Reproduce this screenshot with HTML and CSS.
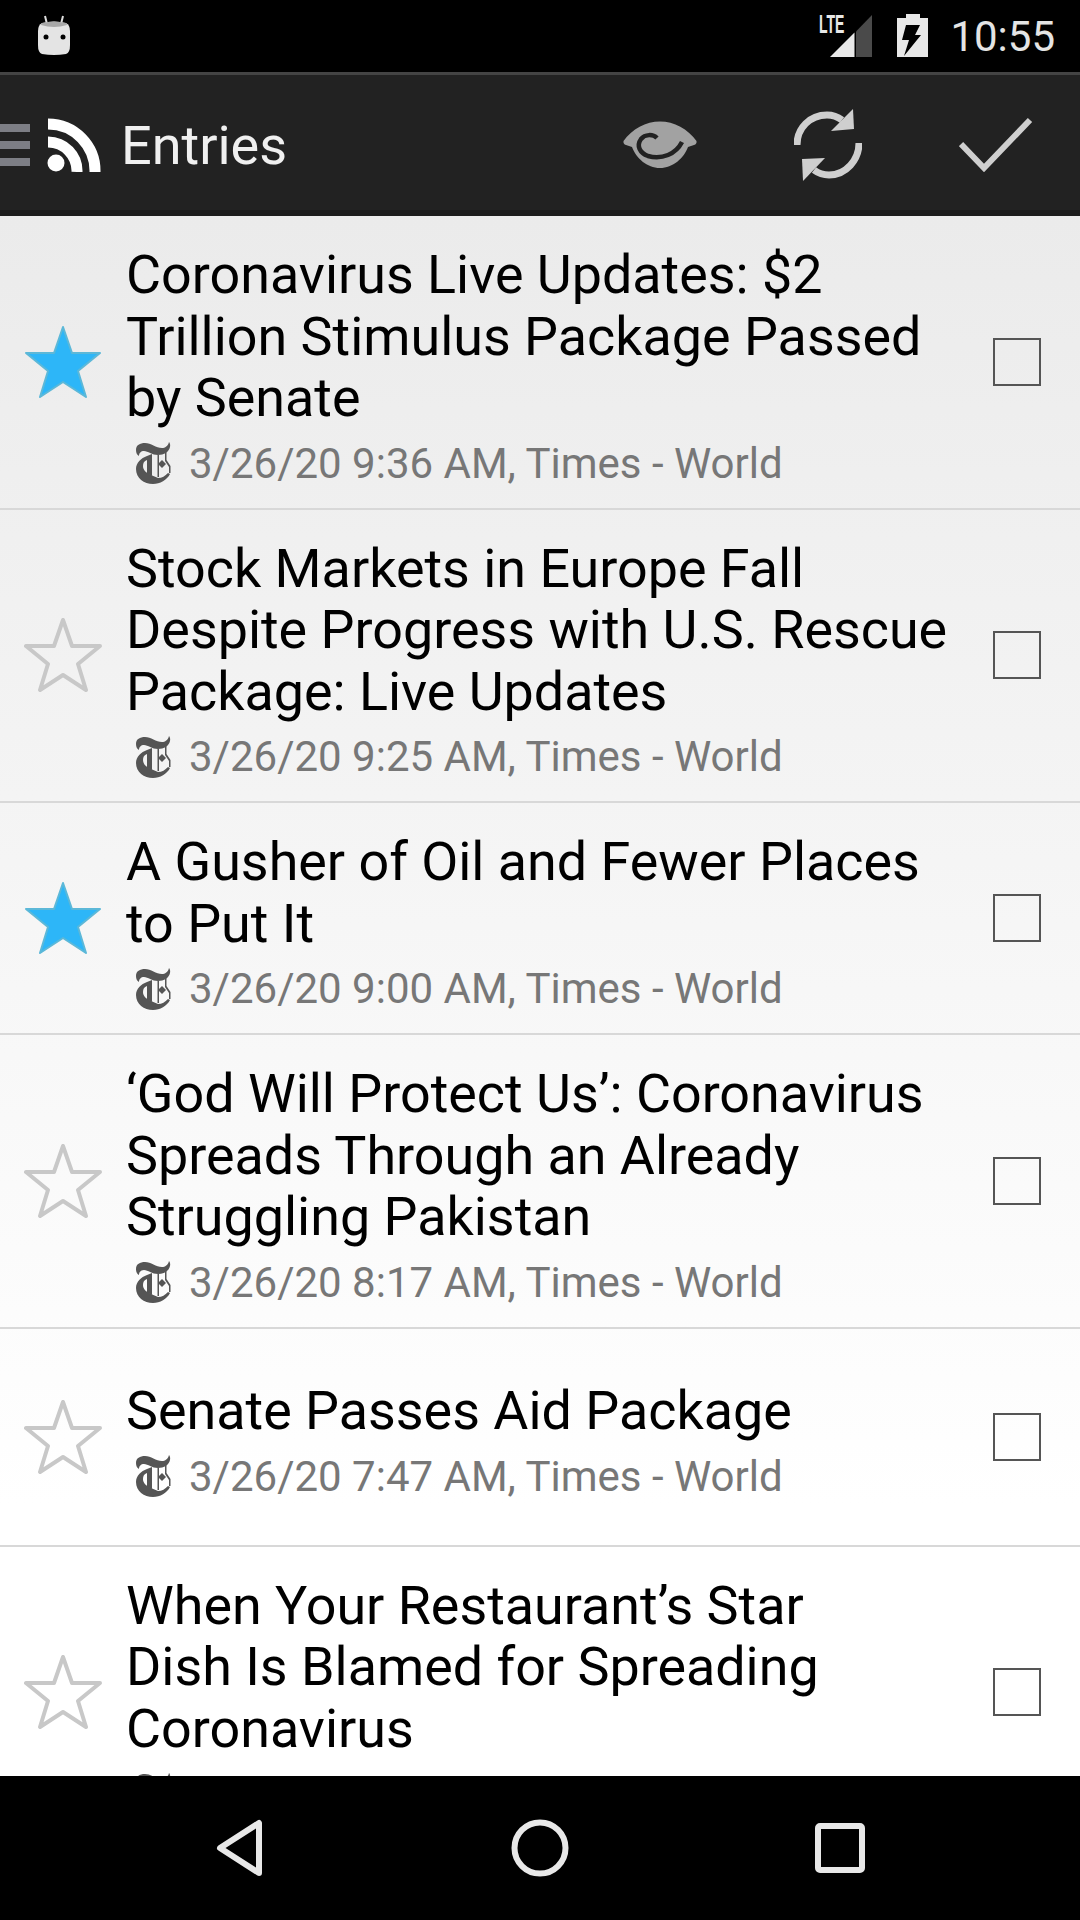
FILE: index.html
```html
<!DOCTYPE html>
<html lang="en">
<head>
    <meta charset="UTF-8">
    <meta name="viewport" content="width=device-width, initial-scale=1.0">
    <title>Entries</title>
    <link rel="stylesheet" href="styles.css">
</head>
<body>
    <svg class="defs" width="0" height="0">
        <symbol id="star" viewBox="0 0 78 74">
            <path d="M39 2 L48 28 L76 28 L54 46 L62 72 L39 57 L16 72 L24 46 L2 28 L30 28 Z"/>
        </symbol>
        <symbol id="nyt" viewBox="0 0 35 42">
            <path d="M0 8 C0 3 4 1 9 1 C15 1 20 6 26 6 C29 6 32 4 33 0 C34 1 34.500 3 34 5 C33 10 28 13 22 13 C16 13 12 9 8 9 C5 9 3 11 3 14 C1 13 0 11 0 8 Z"/>
            <path d="M11 14 C5 16 0 21 0 27 C0 36 8 42 17 42 C24 42 31 38 34 32 L32 31 C29 34 26 36 22 36 L15 33 C10 31 7 28 7 24 C7 21 8 19 11 18 Z"/>
            <path d="M11 14 L16 12 L16 34 L11 32 Z"/>
            <path d="M26 18 L30 22 L26 26 L22 22 Z"/>
            <path d="M21.500 13 L23 13 L23 35 L21.500 35 Z"/>
            <path d="M29 11 L30.500 10 L30.500 18 L34.500 24 L34.500 31 L33 31 L33 25 L29 19 Z"/>
        </symbol>
    </svg>

    <div class="status-bar">
        <svg class="android" width="36" height="42" viewBox="0 0 36 42">
            <path class="android-ant" d="M9 1 L11 9 M27 1 L25 9"/>
            <path class="android-head" d="M6 8 Q18 5 30 8 Q34 10 34 16 L34 30 Q34 38 30 39 Q18 41 6 39 Q2 38 2 30 L2 16 Q2 10 6 8 Z"/>
            <path class="android-top" d="M6 8 Q18 5 30 8 Q31 9 31 10 Q18 14 5 10 Q5 9 6 8 Z"/>
            <circle class="android-eye" cx="10" cy="22" r="2.500"/>
            <circle class="android-eye" cx="27" cy="22" r="2.500"/>
        </svg>
        <div class="status-right">
            <svg class="signal" width="54" height="52" viewBox="0 -4 54 52">
                <text class="lte" transform="translate(0 19) scale(.56 1)">LTE</text>
                <path class="signal-on" d="M11 43 L35.500 18.500 L35.500 43 Z"/>
                <path class="signal-off" d="M37 17.500 L53 1 L53 43 L37 43 Z"/>
            </svg>
            <svg class="battery" width="32" height="44" viewBox="0 0 32 44">
                <path class="battery-body" fill-rule="evenodd" d="M10 0 L24 0 L24 4 L32 4 L32 43 L1 43 L1 4 L10 4 Z M10 11 L24 11 L19 21 L25 21 L8 42 L13 26 L6 26 Z"/>
            </svg>
            <span class="clock">10:55</span>
        </div>
    </div>

    <div class="app-bar">
        <div class="drawer-icon"><span></span><span></span><span></span></div>
        <svg class="rss" width="54" height="54" viewBox="0 0 54 54">
            <circle cx="9" cy="45" r="8.500"/>
            <path class="rss-arc" d="M1 24 A29 29 0 0 1 30 54"/>
            <path class="rss-arc" d="M1 6 A47 47 0 0 1 48 54"/>
        </svg>
        <span class="app-title">Entries</span>
        <div class="actions">
            <div class="action">
                <svg width="76" height="50" viewBox="0 0 76 50">
                    <path class="eye" d="M1.500 21 C10 9 24 1.500 38 1.500 C52 1.500 66 9 74.500 21 Q75 24 72 25 L66 27 C62 38 51 48 38 48 C25 48 14 38 10 27 L4 25 Q1 24 1.500 21 Z"/>
                    <path class="eye-ring" d="M35 18 C31 14 23 14 19 19 C14 26 18 33 26 36 C40 40 54 34 60 22"/>
                </svg>
            </div>
            <div class="action">
                <svg width="68" height="74" viewBox="0 0 68 74">
                    <path class="sync-line" d="M3 37 C3 20 16 7 33 7 C39 7 44 9 48 12"/>
                    <path class="sync-head" d="M59 1 L60 21 L37 23 Z"/>
                    <path class="sync-line" d="M65 35 C65 52 52 67 35 67 C29 67 24 65 20 62"/>
                    <path class="sync-head" d="M9 73 L8 51 L31 50 Z"/>
                </svg>
            </div>
            <div class="action">
                <svg width="74" height="56" viewBox="0 0 74 56">
                    <path class="tick" d="M2 27 L25 51 L71 3"/>
                </svg>
            </div>
        </div>
    </div>
    <div class="app-bar-edge"></div>

    <div class="list">
        <div class="row">
            <svg class="star on"><use href="#star"/></svg>
            <div class="row-text">
                <div class="entry-title">Coronavirus Live Updates: $2 Trillion Stimulus Package Passed by Senate</div>
                <div class="entry-meta"><svg class="feed-logo"><use href="#nyt"/></svg>3/26/20 9:36 AM, Times - World</div>
            </div>
            <div class="checkbox"></div>
        </div>
        <div class="row">
            <svg class="star"><use href="#star"/></svg>
            <div class="row-text">
                <div class="entry-title">Stock Markets in Europe Fall Despite Progress with U.S. Rescue Package: Live Updates</div>
                <div class="entry-meta"><svg class="feed-logo"><use href="#nyt"/></svg>3/26/20 9:25 AM, Times - World</div>
            </div>
            <div class="checkbox"></div>
        </div>
        <div class="row">
            <svg class="star on"><use href="#star"/></svg>
            <div class="row-text">
                <div class="entry-title">A Gusher of Oil and Fewer Places to Put It</div>
                <div class="entry-meta"><svg class="feed-logo"><use href="#nyt"/></svg>3/26/20 9:00 AM, Times - World</div>
            </div>
            <div class="checkbox"></div>
        </div>
        <div class="row">
            <svg class="star"><use href="#star"/></svg>
            <div class="row-text">
                <div class="entry-title">‘God Will Protect Us’: Coronavirus Spreads Through an Already Struggling Pakistan</div>
                <div class="entry-meta"><svg class="feed-logo"><use href="#nyt"/></svg>3/26/20 8:17 AM, Times - World</div>
            </div>
            <div class="checkbox"></div>
        </div>
        <div class="row">
            <svg class="star"><use href="#star"/></svg>
            <div class="row-text">
                <div class="entry-title">Senate Passes Aid Package</div>
                <div class="entry-meta"><svg class="feed-logo"><use href="#nyt"/></svg>3/26/20 7:47 AM, Times - World</div>
            </div>
            <div class="checkbox"></div>
        </div>
        <div class="row">
            <svg class="star"><use href="#star"/></svg>
            <div class="row-text">
                <div class="entry-title">When Your Restaurant’s Star Dish&nbsp;Is Blamed for Spreading Coronavirus</div>
                <div class="entry-meta"><svg class="feed-logo"><use href="#nyt"/></svg></div>
            </div>
            <div class="checkbox"></div>
        </div>
    </div>

    <div class="nav-bar">
        <svg width="50" height="60" viewBox="0 0 50 60">
            <path class="nav-shape" d="M44 5 L44 55 L5 30 Z"/>
        </svg>
        <svg width="60" height="60" viewBox="0 0 60 60">
            <circle class="nav-shape" cx="30" cy="30" r="25.500"/>
        </svg>
        <svg width="52" height="52" viewBox="0 0 52 52">
            <rect class="nav-shape" x="3" y="4" width="44" height="44" rx="2"/>
        </svg>
    </div>
</body>
</html>
```

FILE: styles.css
```css
* {
    box-sizing: border-box;
}

body {
    margin: 0;
    height: 1920px;
    display: flex;
    flex-direction: column;
    overflow: hidden;
    font-family: Roboto, "Liberation Sans", sans-serif;
    background-color: #fff;
}

.defs {
    position: absolute;
}

/* status bar */
.status-bar {
    height: 72px;
    flex: none;
    display: flex;
    align-items: center;
    justify-content: space-between;
    padding: 0 25px 0 36px;
    background-color: #000;
}
.android-ant {
    stroke: #ddd;
    stroke-width: 2;
    fill: none;
}
.android-head {
    fill: #e4e4e4;
}
.android-top {
    fill: #a8a8a8;
}
.android-eye {
    fill: #000;
}
.status-right {
    display: flex;
    align-items: center;
}
.lte {
    font-family: "Liberation Sans", sans-serif;
    font-size: 25px;
    font-weight: bold;
    fill: #e8e8e8;
}
.signal-on {
    fill: #e8e8e8;
}
.signal-off {
    fill: #4a4a4a;
}
.signal {
    margin-right: 23px;
}
.battery {
    margin-right: 22px;
}
.battery-body {
    fill: #e8e8e8;
}
.clock {
    font-size: 42px;
    color: #e4e4e4;
}

/* action bar */
.app-bar {
    height: 138px;
    flex: none;
    display: flex;
    align-items: center;
    padding-top: 4px;
    border-top: 3px solid #444;
    background-color: #222;
}
.app-bar-edge {
    height: 6px;
    flex: none;
    background-color: #1c1c1c;
}
.drawer-icon {
    width: 30px;
    display: flex;
    flex-direction: column;
    gap: 9px;
    margin-right: 17px;
}
.drawer-icon span {
    height: 8px;
    background-color: #7d7e85;
}
.rss {
    flex: none;
}
.rss circle {
    fill: #fff;
}
.rss-arc {
    fill: none;
    stroke: #fff;
    stroke-width: 11;
}
.app-title {
    margin-left: 20px;
    padding-top: 2px;
    font-size: 54px;
    color: #f0f0f0;
}
.actions {
    display: flex;
    margin-left: auto;
}
.action {
    width: 168px;
    display: flex;
    align-items: center;
    justify-content: center;
}
.eye {
    fill: #a2a2a2;
}
.eye-ring {
    fill: none;
    stroke: #222;
    stroke-width: 4.500;
}
.sync-line {
    fill: none;
    stroke: #cfcfcf;
    stroke-width: 7;
}
.sync-head {
    fill: #cfcfcf;
}
.tick {
    fill: none;
    stroke: #cfcfcf;
    stroke-width: 6;
}

/* entries */
.list {
    flex: 1;
    min-height: 0;
    overflow: hidden;
    background: linear-gradient(#ebebeb, #fff 1290px);
}
.row {
    display: flex;
    align-items: center;
    min-height: 218px;
    padding: 0 39px 0 24px;
    border-bottom: 2px solid #d8d8d8;
}
.star {
    width: 78px;
    height: 74px;
    flex: none;
    fill: transparent;
    stroke: #c8c8c8;
    stroke-width: 4;
    stroke-linejoin: round;
}
.star.on {
    fill: #2db6f8;
    stroke: #5cb8d8;
    stroke-width: 2;
}
.row-text {
    flex: 1;
    min-width: 0;
    margin-left: 24px;
    padding: 28px 30px 10px 0;
}
.entry-title {
    font-size: 53.850px;
    line-height: 61.500px;
    color: #000;
}
.entry-meta {
    display: flex;
    align-items: center;
    height: 69px;
    padding-left: 10px;
    font-size: 42px;
    color: #777;
}
.feed-logo {
    width: 35px;
    height: 42px;
    flex: none;
    margin-right: 18px;
    fill: #555;
}
.checkbox {
    width: 48px;
    height: 48px;
    flex: none;
    border: 2px solid #555;
}

/* nav bar */
.nav-bar {
    height: 144px;
    flex: none;
    position: relative;
    z-index: 1;
    display: flex;
    align-items: center;
    padding-left: 215px;
    gap: 245px;
    background-color: #000;
}
.nav-shape {
    fill: none;
    stroke: #e8e8e8;
    stroke-width: 6;
    stroke-linejoin: round;
}
```
